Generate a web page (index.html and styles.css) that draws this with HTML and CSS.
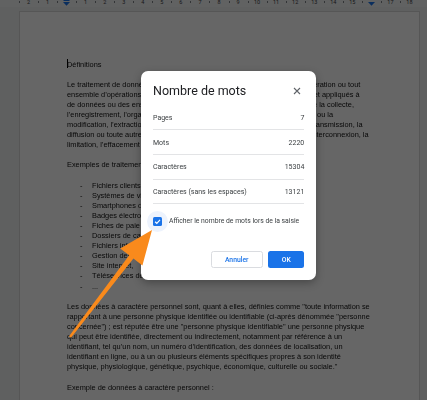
FILE: index.html
```html
<!DOCTYPE html>
<html lang="fr">
<head>
<meta charset="utf-8">
<title>Nombre de mots</title>
<link rel="stylesheet" href="styles.css">
</head>
<body>
<div class="app">
  <div class="ruler">
    <div class="cell"><span>2</span></div>
    <div class="cell"><span>1</span></div>
    <div class="cell"><svg class="marker" width="7" height="7" viewBox="0 0 7 7"><rect x="0.5" y="0" width="6" height="2" fill="#1a73e8"/><path d="M0 3H7L3.5 6.8Z" fill="#1a73e8"/></svg></div>
    <div class="cell"><span>1</span></div>
    <div class="cell"><span>2</span></div>
    <div class="cell"><span>3</span></div>
    <div class="cell"><span>4</span></div>
    <div class="cell"><span>5</span></div>
    <div class="cell"><span>6</span></div>
    <div class="cell"><span>7</span></div>
    <div class="cell"><span>8</span></div>
    <div class="cell"><span>9</span></div>
    <div class="cell"><span>10</span></div>
    <div class="cell"><span>11</span></div>
    <div class="cell"><span>12</span></div>
    <div class="cell"><span>13</span></div>
    <div class="cell"><span>14</span></div>
    <div class="cell"><span>15</span></div>
    <div class="cell"><svg class="marker" width="7" height="7" viewBox="0 0 7 7"><path d="M0 3H7L3.5 6.8Z" fill="#1a73e8"/></svg></div>
    <div class="cell"><span>17</span></div>
    <div class="cell"><span>18</span></div>
  </div>
  <div class="canvas">
    <div class="page">
      <div class="doc">
        <p><span class="cursor"></span>Définitions</p>
        <p>Le traitement de données à caractère personnel est défini comme "toute opération ou tout<br>ensemble d’opérations effectuées ou non à l’aide de procédés automatisés et appliqués à<br>de données ou des ensembles de données à caractère personnel, telles que la collecte,<br>l’enregistrement, l’organisation, la structuration, la conservation, l’adaptation ou la<br>modification, l’extraction, la consultation, l’utilisation, la communication par transmission, la<br>diffusion ou toute autre forme de mise à disposition, le rapprochement ou l’interconnexion, la<br>limitation, l’effacement ou la destruction".</p>
        <p>Exemples de traitements de données :</p>
        <ul class="list">
          <li><span class="dash">-</span><span>Fichiers clients et prospects</span></li>
          <li><span class="dash">-</span><span>Systèmes de vidéosurveillance</span></li>
          <li><span class="dash">-</span><span>Smartphones des salariés</span></li>
          <li><span class="dash">-</span><span>Badges électroniques</span></li>
          <li><span class="dash">-</span><span>Fiches de paie</span></li>
          <li><span class="dash">-</span><span>Dossiers de candidature</span></li>
          <li><span class="dash">-</span><span>Fichiers informatiques</span></li>
          <li><span class="dash">-</span><span>Gestion des congés</span></li>
          <li><span class="dash">-</span><span>Site internet,</span></li>
          <li><span class="dash">-</span><span>Téléservices de</span></li>
          <li><span class="dash">-</span><span>...</span></li>
        </ul>
        <p>Les données à caractère personnel sont, quant à elles, définies comme "toute information se<br>rapportant à une personne physique identifiée ou identifiable (ci-après dénommée "personne<br>concernée") ; est réputée être une "personne physique identifiable" une personne physique<br>qui peut être identifiée, directement ou indirectement, notamment par référence à un<br>identifiant, tel qu’un nom, un numéro d’identification, des données de localisation, un<br>identifiant en ligne, ou à un ou plusieurs éléments spécifiques propres à son identité<br>physique, physiologique, génétique, psychique, économique, culturelle ou sociale."</p>
        <p>Exemple de données à caractère personnel :</p>
      </div>
    </div>
  </div>
</div>

<div class="scrim"></div>

<div class="dialog" role="dialog" aria-label="Nombre de mots">
  <div class="dialog-head">
    <h1 class="dialog-title">Nombre de mots</h1>
    <svg class="close" width="8" height="8" viewBox="0 0 8 8"><path d="M1 1L7 7M7 1L1 7" stroke="#5f6368" stroke-width="1.1" fill="none"/></svg>
  </div>
  <div class="stats">
    <div class="row"><span>Pages</span><span>7</span></div>
    <div class="row"><span>Mots</span><span>2220</span></div>
    <div class="row"><span>Caractères</span><span>15304</span></div>
    <div class="row"><span>Caractères (sans les espaces)</span><span>13121</span></div>
  </div>
  <label class="check-row">
    <span class="halo"><svg width="9" height="9" viewBox="0 0 9 9"><rect width="9" height="9" rx="1.5" fill="#1a73e8"/><path d="M2.1 4.7L3.8 6.3L7 2.9" stroke="#fff" stroke-width="1.2" fill="none"/></svg></span>
    <span class="check-label">Afficher le nombre de mots lors de la saisie</span>
  </label>
  <div class="actions">
    <button class="btn btn-cancel">Annuler</button>
    <button class="btn btn-ok">OK</button>
  </div>
</div>

<svg class="arrow" width="427" height="400" viewBox="0 0 427 400">
  <polygon points="152,230 142.4,265.5 133.4,258.6 71,337.7 69,336.3 129.2,255.2 120.2,248.5" fill="#f98a1c"/>
</svg>
</body>
</html>
```

FILE: styles.css
```css
html, body {
  margin: 0;
  height: 400px;
  overflow: hidden;
}
body {
  background: #eef0f1;
  font-family: "Liberation Sans", Arial, sans-serif;
}
.ruler {
  height: 7px;
  display: flex;
  padding-left: 19px;
  background: #f3f4f5;
}
.cell {
  width: 19.05px;
  flex: none;
  display: flex;
  justify-content: center;
  align-items: flex-start;
  font-family: Roboto, sans-serif;
  font-size: 5.5px;
  line-height: 5px;
  color: #3c4043;
  background: linear-gradient(#80868b, #80868b) no-repeat 0 1px / 1px 2px;
}
.cell span {
  margin-top: -0.5px;
}
.marker {
  display: block;
  margin-top: -1px;
}
.canvas {
  padding-top: 4px;
}
.page {
  width: 401px;
  min-height: 400px;
  box-sizing: border-box;
  margin-left: 19px;
  background: #fff;
  border: 1px solid #d6d8da;
  border-bottom: none;
  padding: 47px 0 0 47px;
  filter: grayscale(1);
}
.doc {
  font-size: 7.39px;
  line-height: 10.1px;
  color: #111;
  white-space: nowrap;
}
.doc p {
  margin: 0 0 10.1px;
}
.cursor {
  display: inline-block;
  width: 1px;
  height: 9px;
  background: #000;
  margin-right: -1px;
  vertical-align: -1.5px;
}
.list {
  margin: 0 0 10.1px;
  padding: 0 0 0 13px;
  list-style: none;
}
.list li {
  display: flex;
}
.dash {
  width: 12px;
  flex: none;
}
.scrim {
  position: fixed;
  inset: 0;
  background: rgba(0, 0, 0, 0.6);
  z-index: 1;
}
.dialog {
  position: absolute;
  left: 141px;
  top: 71px;
  width: 175px;
  height: 209px;
  box-sizing: border-box;
  padding: 0 11.7px 0 12px;
  background: #fff;
  border-radius: 7px;
  box-shadow: 0 3px 8px rgba(0, 0, 0, 0.3);
  z-index: 2;
  font-family: Roboto, "Liberation Sans", sans-serif;
  display: flex;
  flex-direction: column;
}
.dialog-head {
  display: flex;
  justify-content: space-between;
  align-items: center;
  height: 16px;
  padding-top: 12px;
  margin-bottom: 6.6px;
}
.dialog-title {
  margin: 0;
  font-size: 12.5px;
  font-weight: 400;
  line-height: 16px;
  color: #202124;
}
.close {
  display: block;
  margin-right: 3.5px;
}
.row {
  height: 24.7px;
  box-sizing: border-box;
  border-bottom: 1px solid #e3e4e6;
  display: flex;
  justify-content: space-between;
  align-items: center;
  padding-top: 1px;
  font-size: 7px;
  color: #3c4043;
}
.check-row {
  display: flex;
  align-items: center;
  height: 22px;
  margin-top: 5.7px;
  margin-left: -6px;
}
.halo {
  width: 21px;
  height: 21px;
  border-radius: 50%;
  background: #edf3fd;
  display: flex;
  align-items: center;
  justify-content: center;
  flex: none;
}
.halo svg {
  display: block;
}
.check-label {
  margin-left: 1px;
  font-size: 6.8px;
  color: #3c4043;
  white-space: nowrap;
}
.actions {
  display: flex;
  justify-content: flex-end;
  gap: 5.6px;
  margin-top: 18.7px;
}
.btn {
  height: 17.6px;
  box-sizing: border-box;
  border-radius: 2.5px;
  font-family: Roboto, sans-serif;
  font-size: 6.8px;
  font-weight: 500;
  padding: 0;
  cursor: pointer;
}
.btn-cancel {
  width: 52px;
  background: #fff;
  color: #1a73e8;
  border: 1px solid #dadce0;
}
.btn-ok {
  width: 36px;
  background: #1a73e8;
  color: #fff;
  border: none;
}
.arrow {
  position: fixed;
  left: 0;
  top: 0;
  z-index: 3;
  pointer-events: none;
}
```
